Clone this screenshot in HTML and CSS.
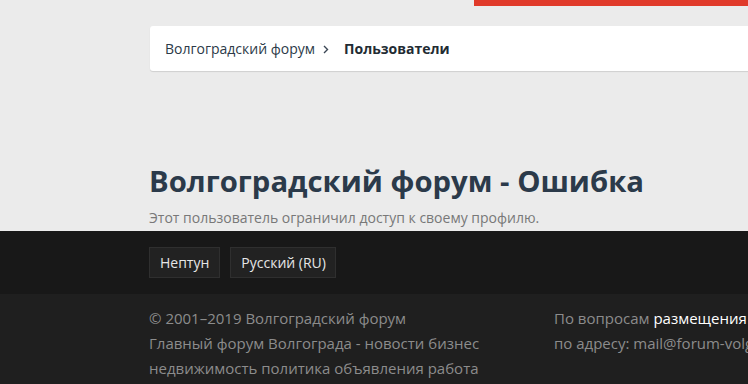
FILE: index.html
```html
<!DOCTYPE html>
<html lang="ru">
<head>
<meta charset="utf-8">
<title>Волгоградский форум - Ошибка</title>
<link rel="stylesheet" href="styles.css">
</head>
<body>
<div class="topbar"><div class="topbar-accent"></div></div>
<div class="wrap">
  <nav class="crumbs">
    <a class="crumb" href="#">Волгоградский форум</a>
    <svg class="chev" width="6" height="9" viewBox="0 0 6 9"><path d="M1 1 L4.5 4.5 L1 8" fill="none" stroke="#3a4654" stroke-width="1.4"/></svg>
    <span class="crumb-current">Пользователи</span>
  </nav>
  <h1 class="title">Волгоградский форум - Ошибка</h1>
  <p class="subtitle">Этот пользователь ограничил доступ к своему профилю.</p>
</div>
<footer class="footer">
  <div class="footer-top">
    <div class="wrap-inner buttons">
      <a class="fbtn" href="#">Нептун</a>
      <a class="fbtn" href="#">Русский (RU)</a>
    </div>
  </div>
  <div class="footer-bottom">
    <div class="wrap-inner cols">
      <div class="col-left">
        <div>© 2001–2019 Волгоградский форум</div>
        <div>Главный форум Волгограда - новости бизнес недвижимость политика объявления работа</div>
      </div>
      <div class="col-right">
        <div>По вопросам <a class="hl" href="#">размещения рекламы</a> обращайтесь</div>
        <div>по адресу: mail@forum-volgograd.ru</div>
      </div>
    </div>
  </div>
</footer>
</body>
</html>
```
FILE: styles.css
```css
html, body {
  margin: 0;
  padding: 0;
}
body {
  background: #ebebeb;
  font-family: "Open Sans", "Noto Sans", sans-serif;
  overflow-x: hidden;
  width: 748px;
}
a { text-decoration: none; }
.topbar {
  height: 6px;
  display: flex;
}
.topbar-accent {
  margin-left: 474px;
  flex: 1;
  background: #e03a2a;
}
.wrap {
  padding-left: 149px;
}
.crumbs {
  margin-top: 20px;
  margin-left: 1px;
  margin-right: -20px;
  height: 45px;
  background: #fff;
  border-radius: 3px;
  box-shadow: 0 1px 1px rgba(0,0,0,0.12);
  display: flex;
  align-items: center;
  padding: 0 15px;
  font-size: 14px;
  box-sizing: border-box;
}
.crumb {
  color: #2c3a48;
}
.chev {
  margin: 1px 15px 0 8px;
}
.crumb-current {
  font-weight: 700;
  color: #222b33;
}
.title {
  margin: 93px 0 0 0;
  font-size: 29.3px;
  line-height: 35px;
  font-weight: 700;
  color: #2b3a4a;
}
.subtitle {
  margin: 8px 0 0 0;
  font-size: 14px;
  line-height: 21px;
  color: #787878;
}
.footer {
  margin-top: 3px;
  font-size: 14px;
}
.footer-top {
  background: #181818;
  padding: 16px 0;
}
.wrap-inner {
  padding-left: 149px;
}
.buttons {
  display: flex;
  gap: 11px;
}
.fbtn {
  display: block;
  height: 31px;
  line-height: 29px;
  box-sizing: border-box;
  padding: 0 10px;
  background: #222222;
  border: 1px solid #2f2f2f;
  color: #e6e6e6;
}
.fbtn + .fbtn {
  padding: 0 9px 0 10px;
  margin-left: -1px;
}
.footer-bottom {
  background: #1f1f1f;
  padding: 12px 0 20px;
}
.cols {
  display: grid;
  grid-template-columns: 405px 1fr;
  font-size: 15px;
  line-height: 25px;
  color: #8c8c8c;
}
.col-right {
  white-space: nowrap;
}
.hl {
  color: #ffffff;
}
```
